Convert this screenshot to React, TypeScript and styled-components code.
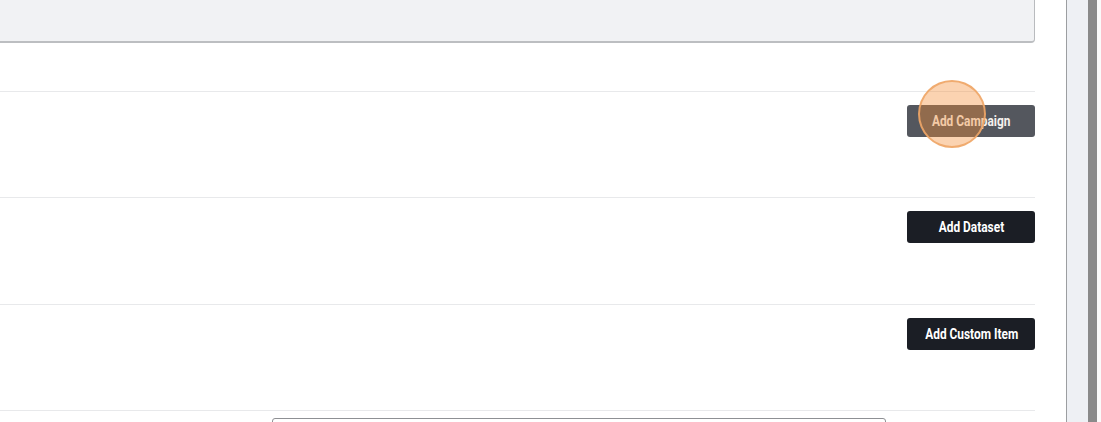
import styled, { createGlobalStyle } from "styled-components";

const GlobalStyle = createGlobalStyle`
  html, body {
    margin: 0;
    padding: 0;
    background: #ffffff;
    overflow: hidden;
  }
  body {
    font-family: Roboto, "Liberation Sans", sans-serif;
  }
`;

const Page = styled.div`
  display: flex;
  width: 1101px;
  height: 422px;
  overflow: hidden;
`;

const Main = styled.main`
  flex: 0 0 1066px;
  padding-right: 31px;
  box-sizing: border-box;
  display: flex;
  flex-direction: column;
`;

const FilterBox = styled.div`
  height: 43px;
  flex-shrink: 0;
  box-sizing: border-box;
  background: #f1f2f4;
  border-right: 1px solid #b9bbbe;
  border-bottom: 2px solid #bcbec1;
  border-bottom-right-radius: 4px;
  margin-bottom: 48px;
`;

const Row = styled.section`
  flex-shrink: 0;
  height: 106.4px;
  box-sizing: border-box;
  border-top: 1px solid #e8e9eb;
  padding-top: 13px;
  display: flex;
  justify-content: flex-end;
  align-items: flex-start;
`;

const LastRow = styled.section`
  flex-shrink: 0;
  height: 40px;
  box-sizing: border-box;
  border-top: 1px solid #e8e9eb;
  padding: 7px 0 0 272px;
  display: flex;
`;

const SearchInput = styled.div`
  width: 614px;
  height: 30px;
  box-sizing: border-box;
  border: 1px solid #8e9094;
  border-radius: 3px;
`;

const Button = styled.button<{ $dim?: boolean }>`
  position: relative;
  width: 128px;
  height: 32px;
  border: none;
  border-radius: 3px;
  background: ${(p) => (p.$dim ? "#54575e" : "#1b1e25")};
  color: ${(p) => (p.$dim ? "#f4f1ee" : "#ffffff")};
  font-family: Roboto, "Liberation Sans", sans-serif;
  font-weight: 700;
  font-size: 14px;
  padding: 0 0 0 1px;
  display: flex;
  align-items: center;
  justify-content: center;
  cursor: pointer;
`;

const Label = styled.span`
  display: inline-block;
  white-space: nowrap;
  transform: scaleX(0.85);
`;

const ClickRing = styled.span`
  position: absolute;
  left: 11px;
  top: -25px;
  width: 64px;
  height: 64px;
  border-radius: 50%;
  background: rgba(245, 140, 50, 0.38);
  border: 2px solid rgba(238, 166, 104, 0.9);
  pointer-events: none;
`;

const SidePanel = styled.aside`
  flex: 1;
  display: flex;
  border-left: 1px solid #9c9ea1;
  background: #eef0f4;
`;

const Track = styled.div`
  flex: 0 0 21px;
`;

const Thumb = styled.div`
  flex: 0 0 9px;
  background: #8a8a8a;
`;

const Edge = styled.div`
  flex: 1;
  background: #fafafa;
`;

const rows = [
  { label: "Add Campaign", active: true },
  { label: "Add Dataset" },
  { label: "Add Custom Item" },
];

export default function App() {
  return (
    <>
      <GlobalStyle />
      <Page>
        <Main>
          <FilterBox />
          {rows.map((r) => (
            <Row key={r.label}>
              <Button $dim={r.active}>
                <Label>{r.label}</Label>
                {r.active && <ClickRing />}
              </Button>
            </Row>
          ))}
          <LastRow>
            <SearchInput />
          </LastRow>
        </Main>
        <SidePanel>
          <Track />
          <Thumb />
          <Edge />
        </SidePanel>
      </Page>
    </>
  );
}
